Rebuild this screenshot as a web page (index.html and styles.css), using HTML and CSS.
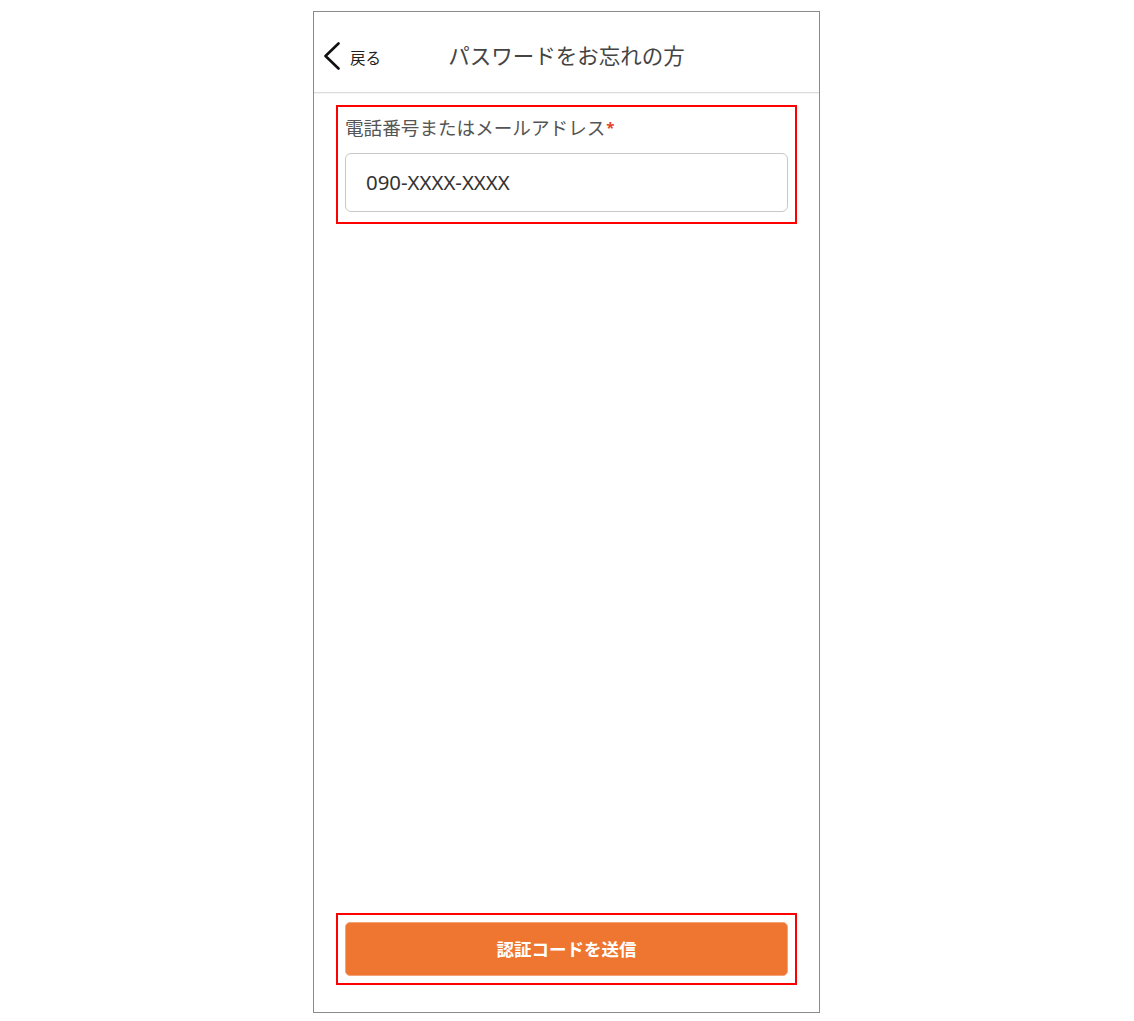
FILE: index.html
```html
<html>

<head>
    <title>パスワードをお忘れの方</title>
    <link rel="stylesheet" href="styles.css">
</head>

<body>
    <div class="phone">
        <header class="topbar">
            <div class="back">
                <svg class="chevron" width="18" height="28" viewBox="0 0 18 28">
                    <path d="M15.5 1.5 L2.5 14 L15.5 26.5" fill="none" stroke="#111" stroke-width="2.6" stroke-linecap="round" stroke-linejoin="round" />
                </svg>
                <span class="back-label">戻る</span>
            </div>
            <h1 class="title">パスワードをお忘れの方</h1>
        </header>

        <main class="content">
            <!-- form field -->
            <div class="mark field">
                <label class="label">電話番号またはメールアドレス<span class="req">*</span></label>
                <div class="input">090-XXXX-XXXX</div>
            </div>

            <!-- submit -->
            <div class="mark action">
                <div class="button">認証コードを送信</div>
            </div>
        </main>
    </div>
</body>

</html>
```

FILE: styles.css
```css
* {
    margin: 0;
    padding: 0;
    box-sizing: border-box;
}

:root {
    --frame-color: #8a8a8a;
    --mark-color: #ff0000;
    --text-color: #444;
    --orange: #ee7631;
}

body {
    font-family: "Noto Sans", "Noto Sans CJK JP", sans-serif;
    background-color: #fff;
    color: var(--text-color);
    padding-top: 11px;
    padding-right: 1px;
}

.phone {
    width: 507px;
    height: 1002px;
    margin-left: auto;
    margin-right: auto;
    border: 1px solid var(--frame-color);
    display: flex;
    flex-direction: column;
}

.topbar {
    position: relative;
    height: 81px;
    display: flex;
    align-items: center;
    justify-content: center;
    border-bottom: 1px solid #dcdcdc;
    box-shadow: 0 1px 1px rgba(0, 0, 0, 0.04);
}

.back {
    position: absolute;
    left: 9px;
    top: 30px;
    display: flex;
    align-items: center;
    gap: 9px;
}

.chevron {
    display: block;
}

.back-label {
    font-size: 15.5px;
    color: #222;
    padding-top: 3px;
}

.title {
    font-weight: normal;
    font-size: 21.5px;
    color: var(--text-color);
    padding-top: 5px;
}

.content {
    flex: 1;
    display: flex;
    flex-direction: column;
    justify-content: space-between;
    padding: 12px 22px 27px 22px;
}

.mark {
    border: 2px solid var(--mark-color);
    padding: 0 7px;
}

.field {
    padding-top: 9px;
    padding-bottom: 10px;
}

.label {
    display: block;
    font-size: 18.6px;
    line-height: 24px;
    color: #555;
    margin-bottom: 12px;
}

.req {
    color: #e0452c;
    font-size: 15px;
    font-weight: bold;
    position: relative;
    top: -2px;
    margin-left: 1px;
}

.input {
    height: 59px;
    border: 1px solid #c8c8c8;
    border-radius: 6px;
    padding-left: 20px;
    font-size: 20.4px;
    line-height: 57px;
    color: #333;
}

.action {
    padding-top: 7px;
    padding-bottom: 7px;
}

.button {
    height: 54px;
    background-color: var(--orange);
    border: 1px solid #f3a476;
    border-radius: 5px;
    color: #fff;
    font-weight: bold;
    font-size: 17.5px;
    text-align: center;
    line-height: 52px;
}
```
